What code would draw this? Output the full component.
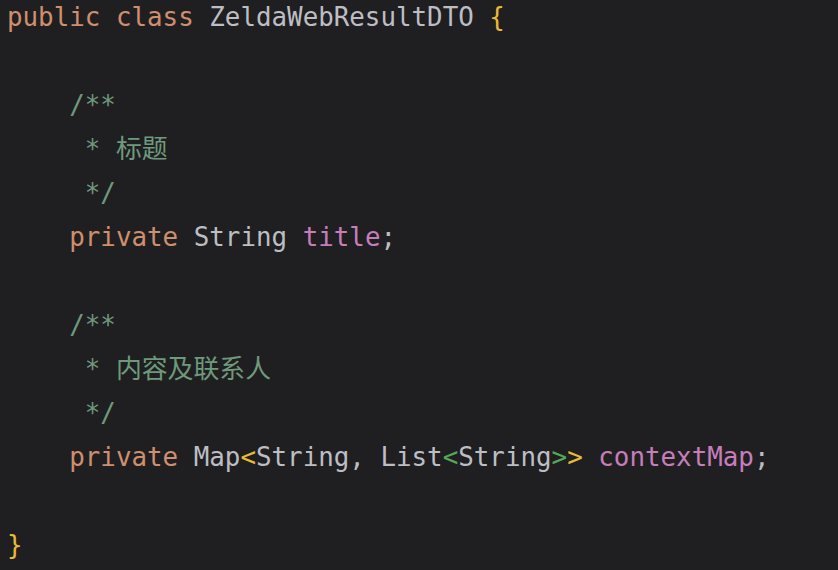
import React from "react";

const K = "text-[#cf8e6d]";
const T = "text-[#bcbec4]";
const C = "text-[#6e9a7c]";
const F = "text-[#c77dbb]";
const Y = "text-[#e8ba36]";
const G = "text-[#54a857]";

const lines = [
  [[K, "public class "], [T, "ZeldaWebResultDTO "], [Y, "{"]],
  [],
  [[C, "    /**"]],
  [[C, "     * 标题"]],
  [[C, "     */"]],
  [[K, "    private "], [T, "String "], [F, "title"], [T, ";"]],
  [],
  [[C, "    /**"]],
  [[C, "     * 内容及联系人"]],
  [[C, "     */"]],
  [
    [K, "    private "],
    [T, "Map"],
    [Y, "<"],
    [T, "String, List"],
    [G, "<"],
    [T, "String"],
    [G, ">"],
    [Y, ">"],
    [T, " "],
    [F, "contextMap"],
    [T, ";"],
  ],
  [],
  [[Y, "}"]],
];

export default function App() {
  return (
    <div className="w-[838px] h-[570px] overflow-hidden bg-[#1f1f21]">
      <div
        className="mt-[-5px] pl-[7px] text-[25.85px] leading-[44px] whitespace-pre"
        style={{ fontFamily: '"DejaVu Sans Mono", "Noto Sans CJK SC", monospace' }}
      >
        {lines.map((segs, i) => (
          <div key={i} className="h-[44px]">
            {segs.map(([cls, txt], j) => (
              <span key={j} className={cls}>
                {txt}
              </span>
            ))}
          </div>
        ))}
      </div>
    </div>
  );
}
